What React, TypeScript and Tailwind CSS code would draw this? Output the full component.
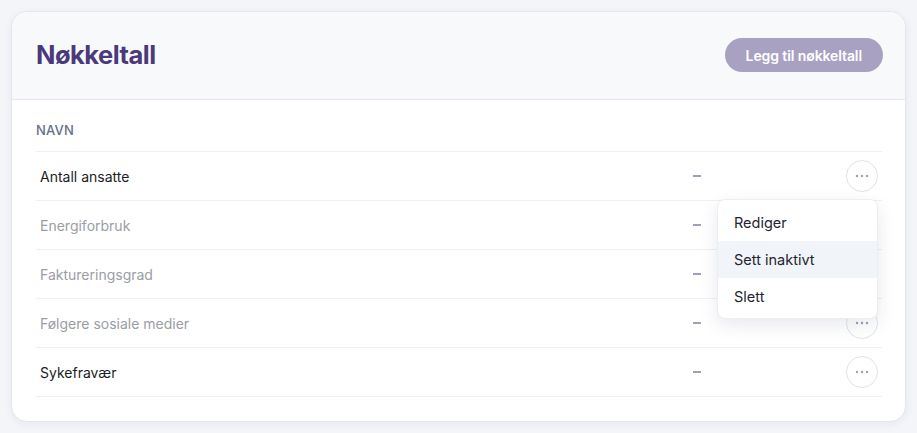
const rows = [
  { name: "Antall ansatte", active: true },
  { name: "Energiforbruk", active: false },
  { name: "Faktureringsgrad", active: false },
  { name: "Følgere sosiale medier", active: false },
  { name: "Sykefravær", active: true },
];

function Dots() {
  return (
    <svg width="14" height="4" viewBox="0 0 14 4" fill="#9aa2b4">
      <circle cx="2" cy="2" r="1.2" />
      <circle cx="7" cy="2" r="1.2" />
      <circle cx="12" cy="2" r="1.2" />
    </svg>
  );
}

function MoreButton({ hidden }: { hidden?: boolean }) {
  return (
    <button
      className={
        "w-[32px] h-[32px] rounded-full border border-[#dfe3ec] bg-white flex items-center justify-center" +
        (hidden ? " invisible" : "")
      }
    >
      <Dots />
    </button>
  );
}

export default function App() {
  return (
    <div className="min-h-[433px] bg-[#f4f5f9] p-[11px] font-['Inter',sans-serif]">
      <div className="rounded-2xl border border-[#e3e6ee] bg-white shadow-[0_2px_8px_rgba(30,40,80,0.06)]">
        <div className="flex items-center justify-between h-[88px] pl-6 pr-[23px] bg-[#f8f9fb] border-b border-[#e5e8ef] rounded-t-2xl">
          <h1 className="text-[25.5px] font-bold text-[#4a3a7c] tracking-[-0.5px] mt-[-1px]">Nøkkeltall</h1>
          <button className="h-[34px] px-[21px] rounded-full bg-[#a9a1c1] text-white text-[14px] font-semibold tracking-[-0.1px] mr-[-1px] mt-[-1px]">
            Legg til nøkkeltall
          </button>
        </div>
        <div className="pl-6 pr-[23px] pt-[21px] pb-6">
          <div className="h-[31px] text-[13px] font-medium text-[#64708a] tracking-[0.2px] border-b border-[#edf0f5]">
            NAVN
          </div>
          {rows.map((r, i) => (
            <div
              key={r.name}
              className="relative flex items-center h-[49px] border-b border-[#edf0f5] pl-1"
            >
              <div className={"flex-1 text-[14px] " + (r.active ? "text-[#1a1d24]" : "text-[#9a9da4]")}>
                {r.name}
              </div>
              <div className="w-[153px]">
                <div className="w-[8px] h-[1.5px] bg-[#9aa3b5]" />
              </div>
              <div className="w-[36px] flex justify-end pr-[4px]">
                <MoreButton hidden={i === 1 || i === 2} />
              </div>
              {i === 0 && (
                <div className="absolute z-10 right-[4px] top-[47px] w-[161px] rounded-lg border border-[#eceef3] bg-white pt-[4px] pb-[3px] shadow-[0_6px_18px_rgba(30,40,80,0.10)] text-[14.5px] text-[#1f2430]">
                  <div className="h-[37px] px-4 flex items-center">Rediger</div>
                  <div className="h-[37px] px-4 flex items-center bg-[#f1f4f8]">Sett inaktivt</div>
                  <div className="h-[37px] px-4 flex items-center">Slett</div>
                </div>
              )}
            </div>
          ))}
        </div>
      </div>
    </div>
  );
}
